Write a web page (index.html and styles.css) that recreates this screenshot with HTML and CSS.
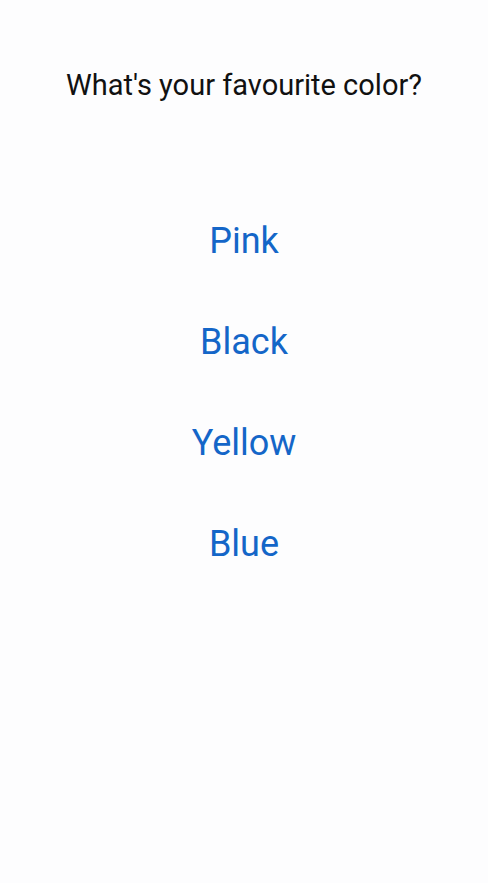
FILE: index.html
```
<!DOCTYPE html>
<html>
<head>
<meta charset="utf-8">
<link rel="stylesheet" href="styles.css">
</head>
<body>
<main class="screen">
  <h1 class="question">What's your favourite color?</h1>
  <ul class="options">
    <li class="option">Pink</li>
    <li class="option">Black</li>
    <li class="option">Yellow</li>
    <li class="option">Blue</li>
  </ul>
</main>
</body>
</html>
```
FILE: styles.css
```
html, body {
  margin: 0;
  padding: 0;
  background: #fdfdfe;
}
.screen {
  width: 488px;
  height: 883px;
  display: flex;
  flex-direction: column;
  align-items: center;
  font-family: Roboto, "Noto Sans", sans-serif;
}
.question {
  margin: 68px 0 0;
  font-size: 29px;
  font-weight: 400;
  line-height: 34px;
  color: #111;
}
.options {
  list-style: none;
  margin: 119px 0 0;
  padding: 0;
  display: flex;
  flex-direction: column;
  align-items: center;
  gap: 61px;
}
.option {
  font-size: 36px;
  line-height: 40px;
  color: #1466c8;
}
```
